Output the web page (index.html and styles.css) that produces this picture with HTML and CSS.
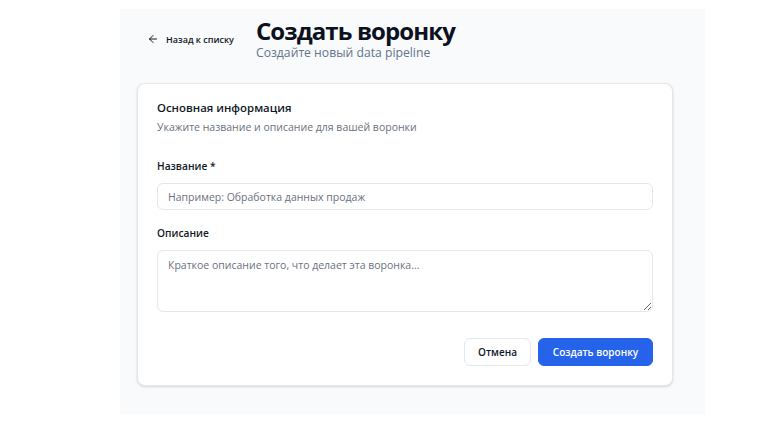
FILE: index.html
```html
<!DOCTYPE html>
<html lang="ru">
<head>
<meta charset="utf-8">
<title>Создать воронку</title>
<link rel="stylesheet" href="styles.css">
</head>
<body>
<div class="page">
  <header class="header">
    <a class="back" href="#">
      <svg class="back-icon" viewBox="0 0 24 24" width="12" height="12" fill="none" stroke="currentColor" stroke-width="2" stroke-linecap="round" stroke-linejoin="round"><path d="M19 12H5"/><path d="M12 19l-7-7 7-7"/></svg>
      <span>Назад к списку</span>
    </a>
    <div class="titles">
      <h1 class="title">Создать воронку</h1>
      <p class="subtitle">Создайте новый data pipeline</p>
    </div>
  </header>
  <section class="card">
    <h2 class="card-title">Основная информация</h2>
    <p class="card-desc">Укажите название и описание для вашей воронки</p>
    <div class="field field-first">
      <label class="label" for="name">Название *</label>
      <input class="input" id="name" type="text" placeholder="Например: Обработка данных продаж">
    </div>
    <div class="field">
      <label class="label" for="desc">Описание</label>
      <textarea class="textarea" id="desc" placeholder="Краткое описание того, что делает эта воронка..."></textarea>
    </div>
    <div class="actions">
      <button class="btn btn-outline" type="button">Отмена</button>
      <button class="btn btn-primary" type="button">Создать воронку</button>
    </div>
  </section>
</div>
</body>
</html>
```
FILE: styles.css
```css
* { box-sizing: border-box; }
html, body {
  margin: 0;
  padding: 0;
  background: #ffffff;
  font-family: "Open Sans", "Noto Sans", "Liberation Sans", sans-serif;
  color: #0f172a;
}
.page {
  margin: 9px 0 0 120px;
  width: 585px;
  background: #f8fafc;
  padding: 0 32px 28px 17px;
}
.header {
  display: flex;
  align-items: center;
  gap: 12px;
  padding-top: 8px;
}
.back {
  display: flex;
  align-items: center;
  gap: 7px;
  padding: 0 10px;
  height: 28px;
  font-size: 9px;
  font-weight: 600;
  color: #111827;
  text-decoration: none;
}
.back-icon { flex: none; }
.titles { display: flex; flex-direction: column; }
.title {
  margin: 0;
  font-size: 24px;
  line-height: 28px;
  font-weight: 700;
  letter-spacing: -0.9px;
  color: #0b1120;
}
.subtitle {
  margin: 0;
  font-size: 12.2px;
  line-height: 16px;
  color: #64748b;
}
.card {
  margin-top: 22px;
  width: 536px;
  background: #ffffff;
  border: 1px solid #e5e7eb;
  border-radius: 8px;
  box-shadow: 0 1px 3px rgba(15, 23, 42, 0.10), 0 1px 2px rgba(15, 23, 42, 0.06);
  padding: 16px 19px 19px;
}
.card-title {
  margin: 0;
  font-size: 11.4px;
  line-height: 16px;
  font-weight: 600;
  color: #111827;
}
.card-desc {
  margin: 3px 0 0;
  font-size: 10.5px;
  line-height: 16px;
  color: #6b7280;
}
.field { display: flex; flex-direction: column; gap: 9px; margin-top: 15px; }
.field-first { margin-top: 23px; }
.label {
  font-size: 10.2px;
  line-height: 16px;
  font-weight: 600;
  color: #111827;
}
.input, .textarea {
  width: 100%;
  border: 1px solid #e5e7eb;
  border-radius: 6px;
  background: #ffffff;
  font-family: inherit;
  font-size: 10.5px;
  color: #111827;
  padding: 0 10px;
  outline: none;
}
.input { height: 27px; }
.textarea {
  display: block;
  height: 62px;
  padding-top: 6px;
  line-height: 16px;
  resize: vertical;
}
.input::placeholder, .textarea::placeholder { color: #6b7280; }
.actions {
  display: flex;
  justify-content: flex-end;
  gap: 7px;
  margin-top: 26px;
}
.btn {
  height: 28px;
  border-radius: 6px;
  font-family: inherit;
  font-size: 10px;
  font-weight: 600;
  padding: 0;
  white-space: nowrap;
  cursor: pointer;
}
.btn-outline {
  width: 67px;
  background: #ffffff;
  border: 1px solid #e5e7eb;
  color: #111827;
}
.btn-primary {
  width: 115px;
  background: #2563eb;
  border: 1px solid #2563eb;
  color: #ffffff;
}
```
